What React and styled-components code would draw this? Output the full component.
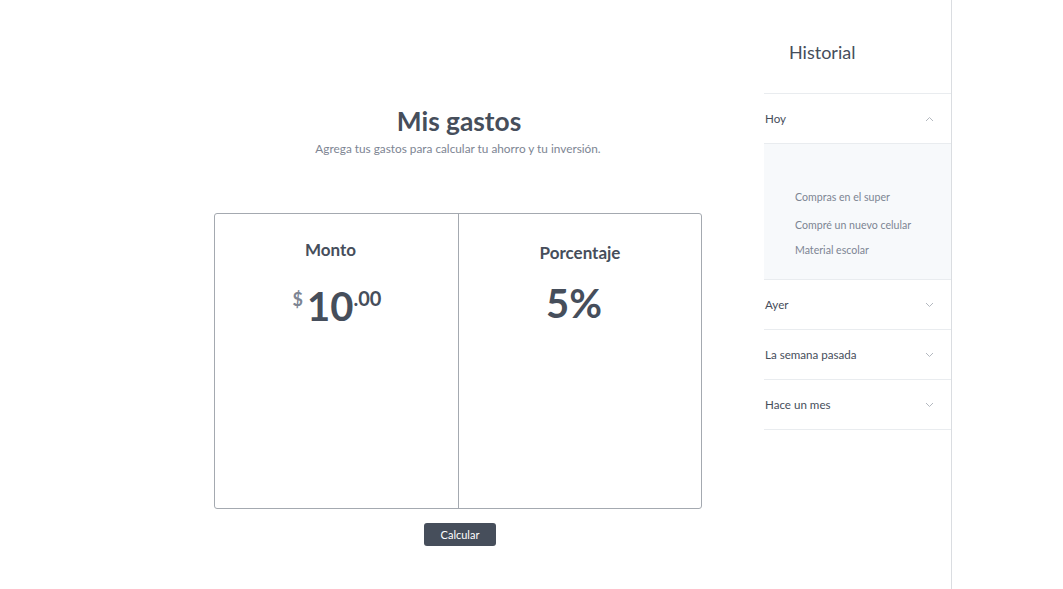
import React, { useState } from 'react'
import styled, { createGlobalStyle } from 'styled-components'

const GlobalStyle = createGlobalStyle`
  html, body {
    margin: 0;
    padding: 0;
    background: #fff;
    font-family: Lato, "Open Sans", sans-serif;
    color: #464e5b;
  }
`;

const Page = styled.div`
  display: flex;
  width: 1063px;
  height: 589px;
  overflow: hidden;
`;

const Main = styled.main`
  width: 764px;
  padding-top: 103px;
  box-sizing: border-box;
`;

const Column = styled.div`
  width: 488px;
  margin-left: 214px;
  display: flex;
  flex-direction: column;
  align-items: center;
`;

const Title = styled.h1`
  margin: 0 0 0 2px;
  font-size: 26.3px;
  font-weight: 700;
  line-height: 36px;
  color: #464e5b;
`;

const Subtitle = styled.p`
  margin: 2px 0 0;
  font-size: 11.8px;
  line-height: 16px;
  color: #7d8593;
`;

const Card = styled.div`
  margin-top: 56px;
  width: 488px;
  height: 296px;
  box-sizing: border-box;
  border: 1px solid #a4a9b0;
  border-radius: 3px;
  display: grid;
  grid-template-columns: 1fr 1fr;
`;

const Cell = styled.div`
  display: flex;
  flex-direction: column;
  align-items: center;
  padding-top: ${p => p.top}px;
  & + & {
    border-left: 1px solid #a4a9b0;
  }
`;

const Label = styled.div`
  font-size: 17px;
  font-weight: 700;
  line-height: 22px;
  margin-left: ${p => p.shift || 0}px;
  color: #464e5b;
`;

const Amount = styled.div`
  display: flex;
  align-items: flex-start;
  margin-top: ${p => p.gap}px;
  margin-left: ${p => p.shift || 0}px;
  font-weight: 700;
  color: #464e5b;
`;

const Currency = styled.span`
  font-size: 18px;
  line-height: 20px;
  margin-top: 5px;
  margin-right: 4px;
  color: #7d8593;
`;

const Big = styled.span`
  font-size: 40px;
  line-height: 44px;
`;

const Cents = styled.span`
  font-size: 20px;
  line-height: 20px;
  margin-top: 4px;
`;

const Button = styled.button`
  margin-top: 14px;
  margin-left: 4px;
  width: 72px;
  height: 23px;
  border: none;
  border-radius: 3px;
  background: #464e5b;
  color: #fff;
  font-family: Lato, sans-serif;
  font-size: 11px;
  padding: 0;
  cursor: pointer;
`;

const Sidebar = styled.aside`
  width: 188px;
  height: 589px;
  border-right: 1px solid #dadde1;
  box-sizing: border-box;
`;

const SideTitle = styled.h2`
  margin: 0;
  padding: 40px 0 0 25px;
  height: 94px;
  box-sizing: border-box;
  font-size: 18px;
  font-weight: 400;
  line-height: 24px;
  color: #464e5b;
  border-bottom: 1px solid #e9ecef;
`;

const Section = styled.div`
  border-bottom: 1px solid #e9ecef;
`;

const Header = styled.button`
  display: flex;
  align-items: center;
  justify-content: space-between;
  width: 100%;
  height: 49px;
  padding: 0 17px 0 1px;
  border: none;
  background: transparent;
  font-family: Lato, sans-serif;
  font-size: 11.6px;
  color: #464e5b;
  cursor: pointer;
  text-align: left;
`;

const Panel = styled.div`
  background: #f7f9fb;
  border-top: 1px solid #e9ecef;
  padding: 46px 0 22px 31px;
  display: flex;
  flex-direction: column;
  gap: 12px;
`;

const Item = styled.div`
  font-size: 10.6px;
  line-height: 14px;
  color: #7d8593;
  &:nth-child(2) { margin-top: 2px; }
  &:nth-child(3) { margin-top: -1px; }
`;

const Chevron = ({ up }) => (
  <svg width="9" height="6" viewBox="0 0 9 6" fill="none">
    <path
      d={up ? 'M1 5 L4.5 1.5 L8 5' : 'M1 1 L4.5 4.5 L8 1'}
      stroke="#b3b8bf"
      strokeWidth="1"
    />
  </svg>
);

const groups = [
  { name: 'Hoy', items: ['Compras en el super', 'Compré un nuevo celular', 'Material escolar'] },
  { name: 'Ayer', items: [] },
  { name: 'La semana pasada', items: [] },
  { name: 'Hace un mes', items: [] },
];

export default function App() {
  const [open, setOpen] = useState('Hoy');

  return (
    <>
      <GlobalStyle />
      <Page>
        <Main>
          <Column>
            <Title>Mis gastos</Title>
            <Subtitle>Agrega tus gastos para calcular tu ahorro y tu inversión.</Subtitle>
            <Card>
              <Cell top={25}>
                <Label shift={-12}>Monto</Label>
                <Amount gap={23} shift={1}>
                  <Currency>$</Currency>
                  <Big>10</Big>
                  <Cents>.00</Cents>
                </Amount>
              </Cell>
              <Cell top={28}>
                <Label>Porcentaje</Label>
                <Amount gap={17} shift={-12}>
                  <Big>5%</Big>
                </Amount>
              </Cell>
            </Card>
            <Button>Calcular</Button>
          </Column>
        </Main>
        <Sidebar>
          <SideTitle>Historial</SideTitle>
          {groups.map(g => (
            <Section key={g.name}>
              <Header onClick={() => setOpen(open === g.name ? null : g.name)}>
                {g.name}
                <Chevron up={open === g.name} />
              </Header>
              {open === g.name && g.items.length > 0 && (
                <Panel>
                  {g.items.map(i => <Item key={i}>{i}</Item>)}
                </Panel>
              )}
            </Section>
          ))}
        </Sidebar>
      </Page>
    </>
  )
}
